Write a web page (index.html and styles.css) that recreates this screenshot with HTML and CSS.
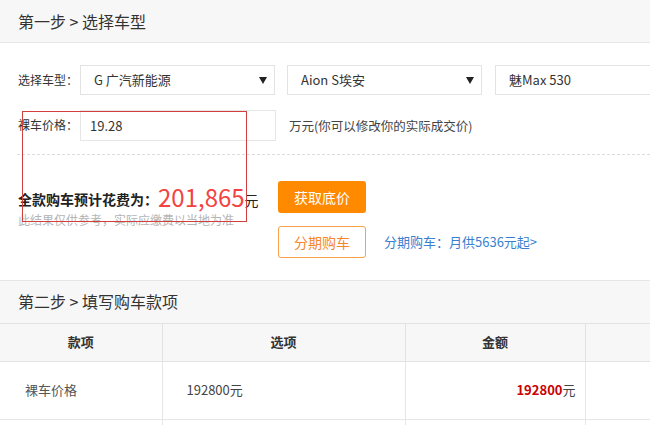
FILE: index.html
```html
<!DOCTYPE html>
<html lang="zh-CN">
<head>
<meta charset="utf-8">
<title>购车计算</title>
<link rel="stylesheet" href="styles.css">
</head>
<body>
<div class="page">
  <div class="step-head">第一步 &gt; 选择车型</div>

  <div class="form">
    <div class="row row-select">
      <span class="label">选择车型：</span>
      <div class="select">
        <span>G 广汽新能源</span>
        <svg class="arrow" width="8" height="7" viewBox="0 0 8 7"><path d="M0 0H8L4 7Z" fill="#222"/></svg>
      </div>
      <div class="select">
        <span>Aion S埃安</span>
        <svg class="arrow" width="8" height="7" viewBox="0 0 8 7"><path d="M0 0H8L4 7Z" fill="#222"/></svg>
      </div>
      <div class="select">
        <span>魅Max 530</span>
      </div>
    </div>

    <div class="row row-price">
      <span class="label">裸车价格：</span>
      <div class="input">19.28</div>
      <span class="hint">万元(你可以修改你的实际成交价)</span>
    </div>
  </div>

  <div class="dash"></div>

  <div class="result">
    <div class="result-left">
      <div class="total"><b>全款购车预计花费为：</b><span class="num">201,865</span><span class="yuan">元</span></div>
      <div class="note">此结果仅供参考，实际应缴费以当地为准</div>
    </div>
    <div class="result-right">
      <div class="btn btn-fill">获取底价</div>
      <div class="loan-row">
        <div class="btn btn-line">分期购车</div>
        <a class="loan-link">分期购车：月供5636元起&gt;</a>
      </div>
    </div>
  </div>

  <div class="step-head step-two">第二步 &gt; 填写购车款项</div>

  <table class="fees">
    <colgroup>
      <col class="c1"><col class="c2"><col class="c3"><col class="c4">
    </colgroup>
    <thead>
      <tr><th>款项</th><th>选项</th><th>金额</th><th></th></tr>
    </thead>
    <tbody>
      <tr>
        <td class="name">裸车价格</td>
        <td class="opt">192800元</td>
        <td class="amt"><b>192800</b>元</td>
        <td></td>
      </tr>
      <tr class="empty"><td></td><td></td><td></td><td></td></tr>
    </tbody>
  </table>

  <div class="mark"></div>
</div>
</body>
</html>
```

FILE: styles.css
```css
* { box-sizing: border-box; }
html, body { margin: 0; padding: 0; background: #fff; }
body {
  width: 650px;
  height: 425px;
  overflow: hidden;
  font-family: "Noto Sans CJK SC", "Noto Sans", sans-serif;
  color: #333;
  font-size: 13px;
  line-height: 1.2;
}
.page {
  position: relative;
  width: 800px;
}
.step-head {
  height: 43px;
  line-height: 42px;
  padding-left: 18px;
  font-size: 16px;
  color: #333;
  background: #f7f7f7;
  border-bottom: 1px solid #e6e6e6;
}
.form {
  padding: 22px 0 0 18px;
}
.row {
  display: flex;
  align-items: center;
}
.label {
  width: 62px;
  flex-shrink: 0;
  white-space: nowrap;
  font-size: 12px;
  color: #333;
}
.select {
  position: relative;
  flex-shrink: 0;
  width: 195px;
  height: 30px;
  border: 1px solid #e3e3e3;
  padding-left: 13px;
  display: flex;
  align-items: center;
  font-size: 13px;
  color: #333;
  margin-right: 12px;
  white-space: nowrap;
}
.select + .select + .select { margin-left: 1px; }
.arrow {
  position: absolute;
  right: 7px;
  top: 11px;
}
.row-price { margin-top: 15px; }
.input {
  flex-shrink: 0;
  width: 196px;
  height: 31px;
  border: 1px solid #e6e6e6;
  padding-left: 9px;
  display: flex;
  align-items: center;
  font-size: 13px;
  color: #333;
}
.hint {
  margin-left: 13px;
  font-size: 12.5px;
  color: #444;
  white-space: nowrap;
}
.dash {
  margin: 13px 0 0 17px;
  border-top: 1px dashed #dcdcdc;
  height: 0;
}
.result {
  display: flex;
  margin-top: 26px;
  padding-left: 18px;
}
.result-left {
  width: 260px;
  flex-shrink: 0;
}
.total {
  height: 32px;
  display: flex;
  align-items: center;
  white-space: nowrap;
}
.total b {
  font-size: 14px;
  font-weight: 700;
  color: #222;
  line-height: 1;
  padding-top: 3px;
}
.num {
  font-size: 24px;
  color: #f24343;
  line-height: 1;
}
.yuan {
  font-size: 14px;
  color: #222;
  line-height: 1;
  padding-top: 5px;
}
.note {
  font-size: 12px;
  color: #b5b5b5;
  line-height: 14px;
  white-space: nowrap;
}
.btn {
  width: 88px;
  height: 32px;
  border-radius: 3px;
  display: flex;
  align-items: center;
  justify-content: center;
  font-size: 14px;
}
.btn-fill {
  background: #ff8a00;
  color: #fff;
}
.loan-row {
  display: flex;
  align-items: center;
  margin-top: 13px;
}
.btn-line {
  border: 1px solid #f7a14a;
  color: #f7862b;
}
.loan-link {
  margin-left: 18px;
  font-size: 13px;
  color: #3a7fd0;
  white-space: nowrap;
}
.step-two {
  margin-top: 22px;
  border-top: 1px solid #e6e6e6;
  border-bottom: 1px solid #e3e3e3;
  height: 44px;
  line-height: 41px;
  background: #f7f7f7;
}
.fees {
  border-collapse: collapse;
  table-layout: fixed;
  width: 800px;
  font-size: 13px;
}
.fees col.c1 { width: 162px; }
.fees col.c2 { width: 243px; }
.fees col.c3 { width: 180px; }
.fees col.c4 { width: 215px; }
.fees th {
  height: 37px;
  background: #f7f7f7;
  font-weight: 700;
  color: #333;
  text-align: center;
  border: 1px solid #e3e3e3;
  border-top: none;
  padding: 0;
}
.fees th:first-child, .fees td:first-child { border-left: none; }
.fees td {
  height: 58px;
  border: 1px solid #e6e6e6;
  color: #555;
  padding: 0;
}
.fees td.name { padding-left: 25px; }
.fees td.opt { padding-left: 24px; color: #444; }
.fees td.amt { text-align: right; padding-right: 9px; color: #444; }
.fees td.amt b { color: #cc0000; font-weight: 700; }
.mark {
  position: absolute;
  left: 22px;
  top: 111px;
  width: 225px;
  height: 111px;
  border: 1px solid #d2403b;
}
```
